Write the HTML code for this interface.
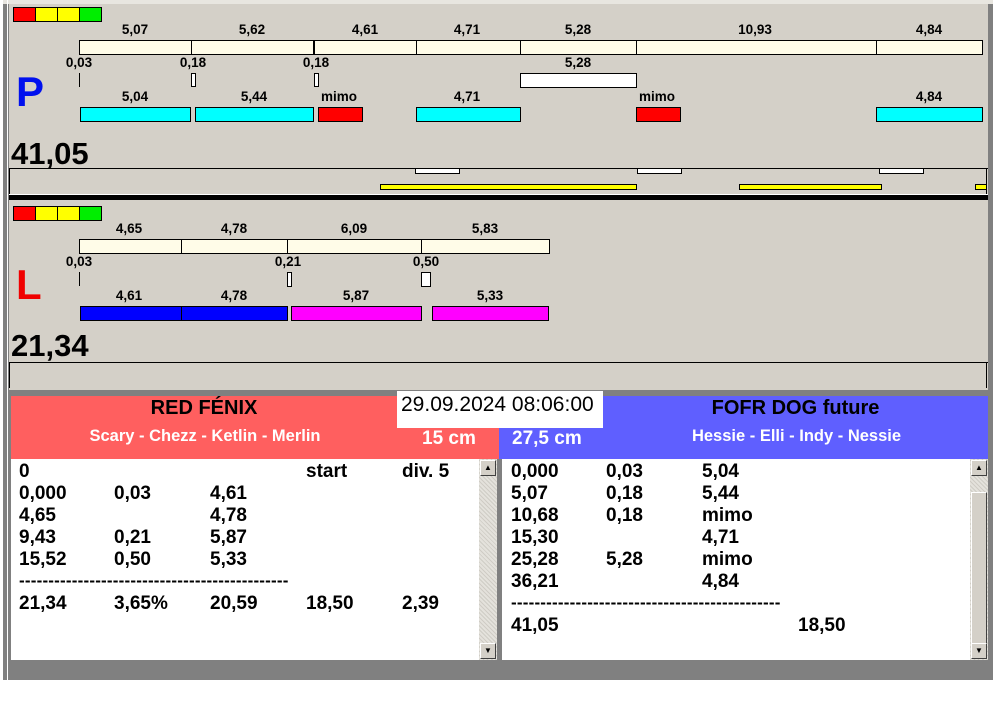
<!DOCTYPE html>
<html><head><meta charset="utf-8"><style>
*{margin:0;padding:0;box-sizing:border-box}
body{width:995px;height:716px;background:#fff;position:relative;overflow:hidden;font-family:"Liberation Sans",Arial,sans-serif;font-weight:bold;color:#000}
div{position:absolute}
.l{font-size:13.5px;line-height:14px;text-align:center;width:60px;margin-left:-30px}
.b{border:1px solid #000}
.cr{background:#fffce8}
.sq{height:15px;width:23px;border:1px solid #000}
.row{font-size:19px;line-height:22px;white-space:nowrap}
.dash{font-size:17px;letter-spacing:0.2px}
.hatch{background-color:#e4e2dc;background-image:repeating-linear-gradient(45deg,#cfccc5 0 1px,transparent 1px 3px)}
.btn{width:16px;height:16px;background:#d4d0c8;border:1px solid;border-color:#fff #404040 #404040 #fff;font-size:8px;text-align:center;line-height:14px;color:#000}
</style></head><body>
<div style="left:3px;top:0;width:990px;height:680px;background:#808080"></div>
<div style="left:9px;top:4px;width:979px;height:386px;background:#d4d0c8"></div>
<div style="left:3px;top:0;width:990px;height:4px;background:#e8e6e0"></div>
<div style="left:7px;top:0;width:1px;height:680px;background:#fff"></div>

<div class="sq" style="left:13px;top:7px;background:#f00"></div>
<div class="sq" style="left:35px;top:7px;background:#ff0"></div>
<div class="sq" style="left:57px;top:7px;background:#ff0"></div>
<div class="sq" style="left:79px;top:7px;background:#0e0"></div>

<div class="l" style="left:135px;top:23px">5,07</div>
<div class="l" style="left:252px;top:23px">5,62</div>
<div class="l" style="left:365px;top:23px">4,61</div>
<div class="l" style="left:467px;top:23px">4,71</div>
<div class="l" style="left:578px;top:23px">5,28</div>
<div class="l" style="left:755px;top:23px">10,93</div>
<div class="l" style="left:929px;top:23px">4,84</div>
<div class="b cr" style="left:79px;top:40px;width:904px;height:15px"></div>
<div style="left:191px;top:40px;width:1px;height:15px;background:#000"></div>
<div style="left:313px;top:40px;width:2px;height:15px;background:#000"></div>
<div style="left:416px;top:40px;width:1px;height:15px;background:#000"></div>
<div style="left:520px;top:40px;width:1px;height:15px;background:#000"></div>
<div style="left:636px;top:40px;width:1px;height:15px;background:#000"></div>
<div style="left:876px;top:40px;width:1px;height:15px;background:#000"></div>

<div class="l" style="left:79px;top:56px">0,03</div>
<div class="l" style="left:193px;top:56px">0,18</div>
<div class="l" style="left:316px;top:56px">0,18</div>
<div class="l" style="left:578px;top:56px">5,28</div>
<div style="left:79px;top:73px;width:1px;height:14px;background:#000"></div>
<div class="b" style="left:191px;top:73px;width:5px;height:14px;background:#fff"></div>
<div class="b" style="left:314px;top:73px;width:5px;height:14px;background:#fff"></div>
<div class="b" style="left:520px;top:73px;width:117px;height:15px;background:#fff"></div>

<div style="left:16px;top:68px;font-size:42px;line-height:48px;color:#0010ee">P</div>

<div class="l" style="left:135px;top:90px">5,04</div>
<div class="l" style="left:254px;top:90px">5,44</div>
<div class="l" style="left:339px;top:90px">mimo</div>
<div class="l" style="left:467px;top:90px">4,71</div>
<div class="l" style="left:657px;top:90px">mimo</div>
<div class="l" style="left:929px;top:90px">4,84</div>
<div class="b" style="left:80px;top:107px;width:111px;height:15px;background:#0ff"></div>
<div class="b" style="left:195px;top:107px;width:119px;height:15px;background:#0ff"></div>
<div class="b" style="left:318px;top:107px;width:45px;height:15px;background:#f00"></div>
<div class="b" style="left:416px;top:107px;width:105px;height:15px;background:#0ff"></div>
<div class="b" style="left:636px;top:107px;width:45px;height:15px;background:#f00"></div>
<div class="b" style="left:876px;top:107px;width:107px;height:15px;background:#0ff"></div>

<div style="left:11px;top:136px;font-size:31px;line-height:36px">41,05</div>
<div style="left:9px;top:168px;width:979px;height:1px;background:#000"></div>
<div style="left:9px;top:168px;width:1px;height:26px;background:#000"></div>
<div style="left:986px;top:168px;width:1px;height:26px;background:#000"></div>
<div class="b" style="left:415px;top:168px;width:45px;height:6px;background:#fff"></div>
<div class="b" style="left:637px;top:168px;width:45px;height:6px;background:#fff"></div>
<div class="b" style="left:879px;top:168px;width:45px;height:6px;background:#fff"></div>
<div class="b" style="left:380px;top:184px;width:257px;height:6px;background:#ff0"></div>
<div class="b" style="left:739px;top:184px;width:143px;height:6px;background:#ff0"></div>
<div class="b" style="left:975px;top:184px;width:12px;height:6px;background:#ff0"></div>
<div style="left:9px;top:194px;width:979px;height:1px;background:#fff"></div>
<div style="left:9px;top:195px;width:979px;height:5px;background:#000"></div>

<div class="sq" style="left:13px;top:206px;background:#f00"></div>
<div class="sq" style="left:35px;top:206px;background:#ff0"></div>
<div class="sq" style="left:57px;top:206px;background:#ff0"></div>
<div class="sq" style="left:79px;top:206px;background:#0e0"></div>

<div class="l" style="left:129px;top:222px">4,65</div>
<div class="l" style="left:234px;top:222px">4,78</div>
<div class="l" style="left:354px;top:222px">6,09</div>
<div class="l" style="left:485px;top:222px">5,83</div>
<div class="b cr" style="left:79px;top:239px;width:471px;height:15px"></div>
<div style="left:181px;top:239px;width:1px;height:15px;background:#000"></div>
<div style="left:287px;top:239px;width:1px;height:15px;background:#000"></div>
<div style="left:421px;top:239px;width:1px;height:15px;background:#000"></div>

<div class="l" style="left:79px;top:255px">0,03</div>
<div class="l" style="left:288px;top:255px">0,21</div>
<div class="l" style="left:426px;top:255px">0,50</div>
<div style="left:79px;top:272px;width:1px;height:14px;background:#000"></div>
<div class="b" style="left:287px;top:272px;width:5px;height:15px;background:#fff"></div>
<div class="b" style="left:421px;top:272px;width:10px;height:15px;background:#fff"></div>

<div style="left:16px;top:262px;font-size:42px;line-height:46px;color:#f00000">L</div>

<div class="l" style="left:129px;top:289px">4,61</div>
<div class="l" style="left:234px;top:289px">4,78</div>
<div class="l" style="left:356px;top:289px">5,87</div>
<div class="l" style="left:490px;top:289px">5,33</div>
<div class="b" style="left:80px;top:306px;width:102px;height:15px;background:#00f"></div>
<div class="b" style="left:181px;top:306px;width:107px;height:15px;background:#00f"></div>
<div class="b" style="left:291px;top:306px;width:131px;height:15px;background:#f0f"></div>
<div class="b" style="left:432px;top:306px;width:117px;height:15px;background:#f0f"></div>

<div style="left:11px;top:328px;font-size:31px;line-height:36px">21,34</div>
<div style="left:9px;top:362px;width:979px;height:1px;background:#000"></div>
<div style="left:9px;top:362px;width:1px;height:26px;background:#000"></div>
<div style="left:986px;top:362px;width:1px;height:26px;background:#000"></div>

<div style="left:11px;top:396px;width:488px;height:63px;background:#ff5f5f"></div>
<div style="left:499px;top:396px;width:489px;height:63px;background:#5f5fff"></div>
<div style="left:11px;top:395px;width:386px;font-size:20px;line-height:26px;text-align:center">RED FÉNIX</div>
<div style="left:11px;top:426px;width:388px;font-size:16.5px;line-height:20px;text-align:center;color:#fff">Scary - Chezz - Ketlin - Merlin</div>
<div style="left:422px;top:428px;font-size:19px;line-height:22px;color:#fff">15 cm</div>
<div style="left:397px;top:391px;width:206px;height:37px;background:#fff;font-weight:normal;font-size:21px;line-height:27px;padding-left:4px;white-space:nowrap">29.09.2024 08:06:00</div>
<div style="left:512px;top:428px;font-size:19px;line-height:22px;color:#fff">27,5 cm</div>
<div style="left:603px;top:395px;width:385px;font-size:20px;line-height:26px;text-align:center">FOFR DOG future</div>
<div style="left:603px;top:426px;width:387px;font-size:16.5px;line-height:20px;text-align:center;color:#fff">Hessie - Elli - Indy - Nessie</div>

<div style="left:11px;top:459px;width:468px;height:201px;background:#fff"></div>
<div class="hatch" style="left:479px;top:459px;width:18px;height:201px"></div>
<div class="btn" style="left:480px;top:460px">▲</div>
<div class="btn" style="left:480px;top:643px">▼</div>
<div class="row" style="left:19px;top:461px">
<div style="left:0;top:0">0</div><div style="left:287px;top:0">start</div><div style="left:383px;top:0">div. 5</div>
<div style="left:0;top:22px">0,000</div><div style="left:95px;top:22px">0,03</div><div style="left:191px;top:22px">4,61</div>
<div style="left:0;top:44px">4,65</div><div style="left:191px;top:44px">4,78</div>
<div style="left:0;top:66px">9,43</div><div style="left:95px;top:66px">0,21</div><div style="left:191px;top:66px">5,87</div>
<div style="left:0;top:88px">15,52</div><div style="left:95px;top:88px">0,50</div><div style="left:191px;top:88px">5,33</div>
<div class="dash" style="left:0;top:109px">----------------------------------------------</div>
<div style="left:0;top:132px">21,34</div><div style="left:95px;top:132px">3,65%</div><div style="left:191px;top:132px">20,59</div><div style="left:287px;top:132px">18,50</div><div style="left:383px;top:132px">2,39</div>
</div>

<div style="left:502px;top:459px;width:468px;height:201px;background:#fff"></div>
<div class="hatch" style="left:970px;top:459px;width:18px;height:201px"></div>
<div style="left:971px;top:492px;width:16px;height:152px;background:#d4d0c8;border:1px solid;border-color:#fff #404040 #404040 #fff"></div>
<div class="btn" style="left:971px;top:460px">▲</div>
<div class="btn" style="left:971px;top:643px">▼</div>
<div class="row" style="left:511px;top:461px">
<div style="left:0;top:0">0,000</div><div style="left:95px;top:0">0,03</div><div style="left:191px;top:0">5,04</div>
<div style="left:0;top:22px">5,07</div><div style="left:95px;top:22px">0,18</div><div style="left:191px;top:22px">5,44</div>
<div style="left:0;top:44px">10,68</div><div style="left:95px;top:44px">0,18</div><div style="left:191px;top:44px">mimo</div>
<div style="left:0;top:66px">15,30</div><div style="left:191px;top:66px">4,71</div>
<div style="left:0;top:88px">25,28</div><div style="left:95px;top:88px">5,28</div><div style="left:191px;top:88px">mimo</div>
<div style="left:0;top:110px">36,21</div><div style="left:191px;top:110px">4,84</div>
<div class="dash" style="left:0;top:131px">----------------------------------------------</div>
<div style="left:0;top:154px">41,05</div><div style="left:287px;top:154px">18,50</div>
</div>
</body></html>
